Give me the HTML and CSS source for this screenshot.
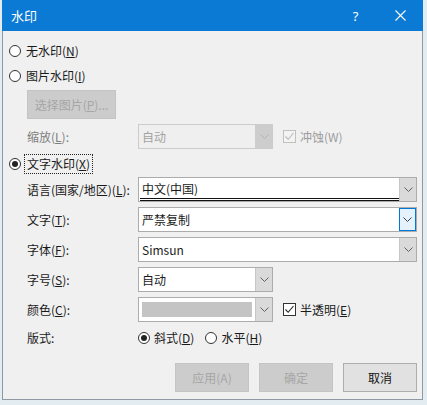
FILE: index.html
```html
<!DOCTYPE html>
<html lang="zh-CN">
<head>
<meta charset="utf-8">
<title>水印</title>
<link rel="stylesheet" href="styles.css">
</head>
<body>
<div class="dialog">
  <div class="titlebar">
    <span class="title">水印</span>
    <span class="tb-btn help">?</span>
    <span class="tb-btn"><svg width="11" height="11" viewBox="0 0 11 11"><path d="M0.5 0.5L10.5 10.5M10.5 0.5L0.5 10.5" stroke="#fff" stroke-width="1.1" fill="none"/></svg></span>
  </div>
  <div class="content">
    <div class="radio-row"><span class="radio"></span><span>无水印(<u>N</u>)</span></div>
    <div class="radio-row r2"><span class="radio"></span><span>图片水印(<u>I</u>)</span></div>
    <div class="btn disabled pick">选择图片(<u>P</u>)...</div>
    <div class="field scale">
      <span class="label dis-label">缩放(<u>L</u>):</span>
      <div class="ctrl">
        <div class="combo narrow disabled">
          <span class="val">自动</span>
          <span class="arrow"><svg width="9" height="5" viewBox="0 0 9 5"><path d="M0.5 0.5L4.5 4.5L8.5 0.5" stroke="#b4b4b4" fill="none"/></svg></span>
        </div>
        <span class="check disabled"><span class="box"><svg width="11" height="11" viewBox="0 0 11 11"><path d="M1.5 5.5L4.2 8.3L9.5 2" stroke="#b8b8b8" stroke-width="1.1" fill="none"/></svg></span><span>冲蚀(W)</span></span>
      </div>
    </div>
    <div class="radio-row r3"><span class="radio on"></span><span class="focus">文字水印(<u>X</u>)</span></div>
    <div class="fields">
      <span class="label">语言(国家/地区)(<u>L</u>):</span>
      <div class="combo lang">
        <span class="val">中文(中国)</span>
        <span class="arrow"><svg width="9" height="5" viewBox="0 0 9 5"><path d="M0.5 0.5L4.5 4.5L8.5 0.5" stroke="#606060" fill="none"/></svg></span>
      </div>

      <span class="label">文字(<u>T</u>):</span>
      <div class="combo">
        <span class="val">严禁复制</span>
        <span class="arrow focus-arrow"><svg width="9" height="5" viewBox="0 0 9 5"><path d="M0.5 0.5L4.5 4.5L8.5 0.5" stroke="#404040" fill="none"/></svg></span>
      </div>

      <span class="label">字体(<u>F</u>):</span>
      <div class="combo">
        <span class="val">Simsun</span>
        <span class="arrow"><svg width="9" height="5" viewBox="0 0 9 5"><path d="M0.5 0.5L4.5 4.5L8.5 0.5" stroke="#606060" fill="none"/></svg></span>
      </div>

      <span class="label">字号(<u>S</u>):</span>
      <div class="ctrl">
        <div class="combo narrow">
          <span class="val">自动</span>
          <span class="arrow"><svg width="9" height="5" viewBox="0 0 9 5"><path d="M0.5 0.5L4.5 4.5L8.5 0.5" stroke="#606060" fill="none"/></svg></span>
        </div>
      </div>

      <span class="label">颜色(<u>C</u>):</span>
      <div class="ctrl">
        <div class="combo narrow">
          <span class="val swatch-wrap"><span class="swatch"></span></span>
          <span class="arrow"><svg width="9" height="5" viewBox="0 0 9 5"><path d="M0.5 0.5L4.5 4.5L8.5 0.5" stroke="#606060" fill="none"/></svg></span>
        </div>
        <span class="check"><span class="box"><svg width="11" height="11" viewBox="0 0 11 11"><path d="M1.5 5.5L4.2 8.3L9.5 2" stroke="#222" stroke-width="1.1" fill="none"/></svg></span><span>半透明(<u>E</u>)</span></span>
      </div>

      <span class="label">版式:</span>
      <div class="ctrl layout">
        <span class="opt"><span class="radio on"></span><span>斜式(<u>D</u>)</span></span>
        <span class="opt"><span class="radio"></span><span>水平(<u>H</u>)</span></span>
      </div>
    </div>
    <div class="actions">
      <div class="btn disabled">应用(A)</div>
      <div class="btn disabled">确定</div>
      <div class="btn">取消</div>
    </div>
  </div>
</div>
</body>
</html>
```
FILE: styles.css
```css
html, body {
  margin: 0;
  padding: 0;
}
body {
  background: #e3ecf1;
  font-family: "Noto Sans CJK SC", "Noto Sans", sans-serif;
  font-size: 12px;
  line-height: 16px;
  color: #1a1a1a;
}
u {
  text-decoration: underline;
  text-underline-offset: 1px;
}
.dialog {
  margin-left: 2px;
  width: 419px;
  border: 1px solid #8e99a4;
  border-top: 0;
  background: #f0f0f0;
}
.titlebar {
  height: 31px;
  margin: 0 -1px;
  background: #0b7ad5;
  color: #fff;
  display: flex;
  align-items: center;
  padding-left: 9px;
}
.title {
  flex: 1;
  font-size: 13px;
}
.tb-btn {
  width: 45px;
  height: 31px;
  display: flex;
  align-items: center;
  justify-content: center;
}
.help {
  font-family: "Noto Sans", sans-serif;
  font-size: 13px;
}
.content {
  padding: 12px 5px 7px 0;
}
.radio-row {
  display: flex;
  align-items: center;
  height: 16px;
  padding-left: 6px;
  gap: 5px;
}
.r2 {
  margin-top: 9px;
}
.r3 {
  margin-top: 5px;
  height: 20px;
  gap: 3px;
}
.radio {
  width: 12px;
  height: 12px;
  box-sizing: border-box;
  border: 1px solid #333;
  border-radius: 50%;
  background: #fff;
  display: flex;
  align-items: center;
  justify-content: center;
  flex: none;
}
.radio.on::after {
  content: "";
  width: 6px;
  height: 6px;
  border-radius: 50%;
  background: #222;
}
.focus {
  height: 20px;
  box-sizing: border-box;
  border: 1px dotted #222;
  padding: 0 2px;
  display: flex;
  align-items: center;
}
.btn {
  display: flex;
  align-items: center;
  justify-content: center;
  box-sizing: border-box;
  border: 1px solid #adadad;
  background: #e1e1e1;
  color: #111;
}
.btn.disabled {
  background: #cccccc;
  border-color: #c4c4c4;
  color: #a6a6a6;
}
.pick {
  margin: 6px 0 0 24px;
  width: 89px;
  height: 29px;
}
.field, .fields {
  display: grid;
  grid-template-columns: 111px 279px;
  padding-left: 24px;
  align-items: center;
}
.scale {
  margin-top: 5px;
  height: 25px;
}
.dis-label {
  color: #7f7f7f;
}
.fields {
  margin-top: 3px;
  grid-template-rows: 25px 25px 25px 25px 25px 22px;
  row-gap: 5px;
}
.ctrl {
  display: flex;
  align-items: center;
  gap: 10px;
}
.combo {
  height: 25px;
  box-sizing: border-box;
  border: 1px solid #acacac;
  background: #fff;
  display: flex;
}
.combo.narrow {
  width: 135px;
  flex: none;
}
.combo .val {
  flex: 1;
  padding-left: 3px;
  display: flex;
  align-items: center;
}
.combo .arrow {
  width: 16px;
  background: #dadada;
  border-left: 1px solid #c6c6c6;
  display: flex;
  align-items: center;
  justify-content: center;
}
.combo .focus-arrow {
  background: #e5f1fb;
  border: 1px solid #0078d7;
  width: 15px;
}
.combo.disabled {
  border-color: #cccccc;
  background: #efefef;
  color: #a3a3a3;
}
.combo.disabled .arrow {
  background: #cdcdcd;
  border-left-color: #cdcdcd;
}
.combo.lang .val {
  box-sizing: border-box;
  margin-left: 1px;
  padding: 2px 0 0 2px;
  border-bottom: 3px double #111;
}
.combo .swatch-wrap {
  padding: 4px 3px 4px 3px;
  align-items: stretch;
}
.swatch {
  flex: 1;
  background: #c4c4c4;
}
.check {
  display: flex;
  align-items: center;
  gap: 4px;
}
.box {
  width: 13px;
  height: 13px;
  box-sizing: border-box;
  border: 1px solid #333;
  background: #fff;
  display: flex;
  align-items: center;
  justify-content: center;
}
.check.disabled {
  color: #9c9c9c;
}
.check.disabled .box {
  border-color: #c0c0c0;
  background: #f3f3f3;
}
.layout {
  gap: 11px;
}
.opt {
  display: flex;
  align-items: center;
  gap: 4px;
}
.actions {
  display: flex;
  justify-content: flex-end;
  gap: 10px;
  margin-top: 14px;
}
.actions .btn {
  width: 74px;
  height: 29px;
}
```
